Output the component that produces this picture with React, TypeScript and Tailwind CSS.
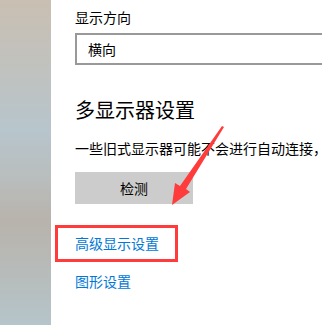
export default function App() {
  return (
    <div
      className="flex h-[325px] w-[322px] overflow-hidden bg-white"
      style={{ fontFamily: '"Noto Sans CJK SC", "Noto Sans", sans-serif' }}
    >
      <div className="h-full w-[51px] shrink-0 bg-[linear-gradient(to_bottom,#c9bfb2_0%,#bcc3c4_30%,#b7c5cc_40%,#b9bdbd_55%,#b8b3ac_68%,#b7bcbb_85%,#b5c5ca_100%)]" />
      <div className="relative flex min-w-0 flex-1 flex-col pl-[24px]">
        <div className="mt-[7px] h-[20px] text-[14px] leading-[20px] text-black">显示方向</div>
        <div className="mt-[6px] flex h-[32px] w-[260px] shrink-0 items-center border-2 border-[#999999] pl-[11px] text-[14px] text-black">
          横向
        </div>
        <div className="mt-[31px] h-[28px] text-[20px] leading-[28px] text-black">多显示器设置</div>
        <div className="mt-[14px] h-[20px] whitespace-nowrap text-[14px] leading-[20px] text-black">
          一些旧式显示器可能不会进行自动连接，
        </div>
        <div className="mt-[14px] flex h-[32px] w-[118px] shrink-0 items-center justify-center bg-[#cccccc] text-[14px] text-black">
          检测
        </div>
        <div className="-ml-[20px] mt-[21px] flex h-[37px] w-[123px] shrink-0 items-center border-[3px] border-[#ff3b3b] pl-[17px]">
          <span className="text-[14px] text-[#0078d7]">高级显示设置</span>
        </div>
        <div className="mt-[9px] h-[20px] text-[14px] leading-[20px] text-[#0078d7]">图形设置</div>
        <svg
          className="absolute left-0 top-0"
          width="271"
          height="325"
          viewBox="51 0 271 325"
        >
          <path d="M224 127 L186 189 L190 192 L172 205 L175 183 L180 186 L222 126 Z" fill="#ff3b3b" />
        </svg>
      </div>
    </div>
  );
}
